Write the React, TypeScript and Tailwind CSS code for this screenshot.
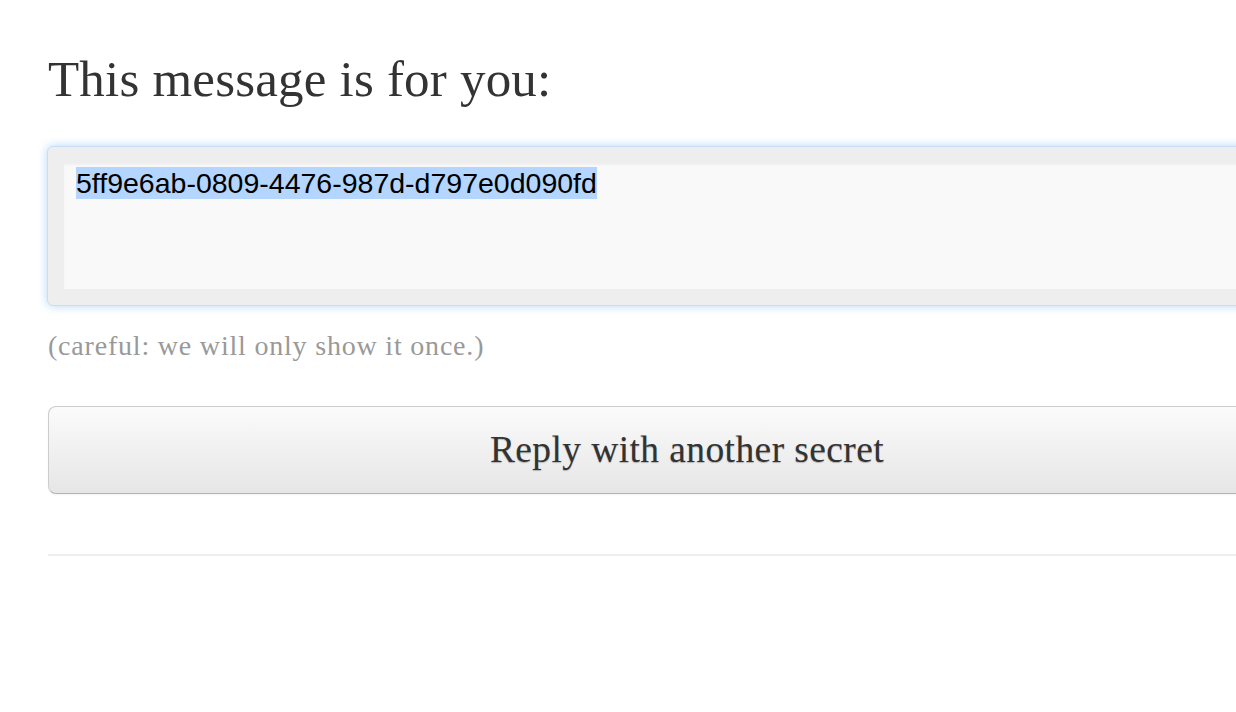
export default function App() {
  return (
    <div className="w-[1236px] h-[712px] overflow-hidden bg-white">
      <div className="w-[1278px] ml-[48px] flex flex-col">
        <h1 className="font-['Liberation_Serif',serif] text-[51px] leading-[56px] tracking-[0.2px] text-[#333] pt-[51px]">
          This message is for you:
        </h1>
        <div className="mt-[39px] -ml-px rounded-[6px] bg-[#eeeeee] border border-[#c9def6] shadow-[0_0_10px_rgba(82,168,236,0.45)] p-[16px]">
          <div className="h-[126px] bg-[#f9f9f9] shadow-[inset_0_2px_2px_rgba(0,0,0,0.04)] px-[12px] pt-[4px]">
            <span className="font-['Liberation_Sans',Arial,sans-serif] text-[28.5px] leading-[32px] text-black bg-[#b4d5fe]">
              5ff9e6ab-0809-4476-987d-d797e0d090fd
            </span>
          </div>
        </div>
        <p className="font-['Liberation_Serif',serif] mt-[24px] text-[28px] leading-[32px] tracking-[0.8px] text-[#999]">
          (careful: we will only show it once.)
        </p>
        <button className="font-['Liberation_Serif',serif] mt-[44px] w-full h-[88px] rounded-[8px] border border-[#cccccc] border-b-[#b3b3b3] bg-gradient-to-b from-[#fbfbfb] to-[#e6e6e6] shadow-[0_1px_2px_rgba(0,0,0,0.05)] text-[37.5px] tracking-[0.4px] text-[#333] [text-shadow:0_1px_1px_rgba(0,0,0,0.25)]">
          Reply with another secret
        </button>
        <div className="mt-[60px] h-[2px] bg-[#eeeeee]" />
      </div>
    </div>
  );
}
